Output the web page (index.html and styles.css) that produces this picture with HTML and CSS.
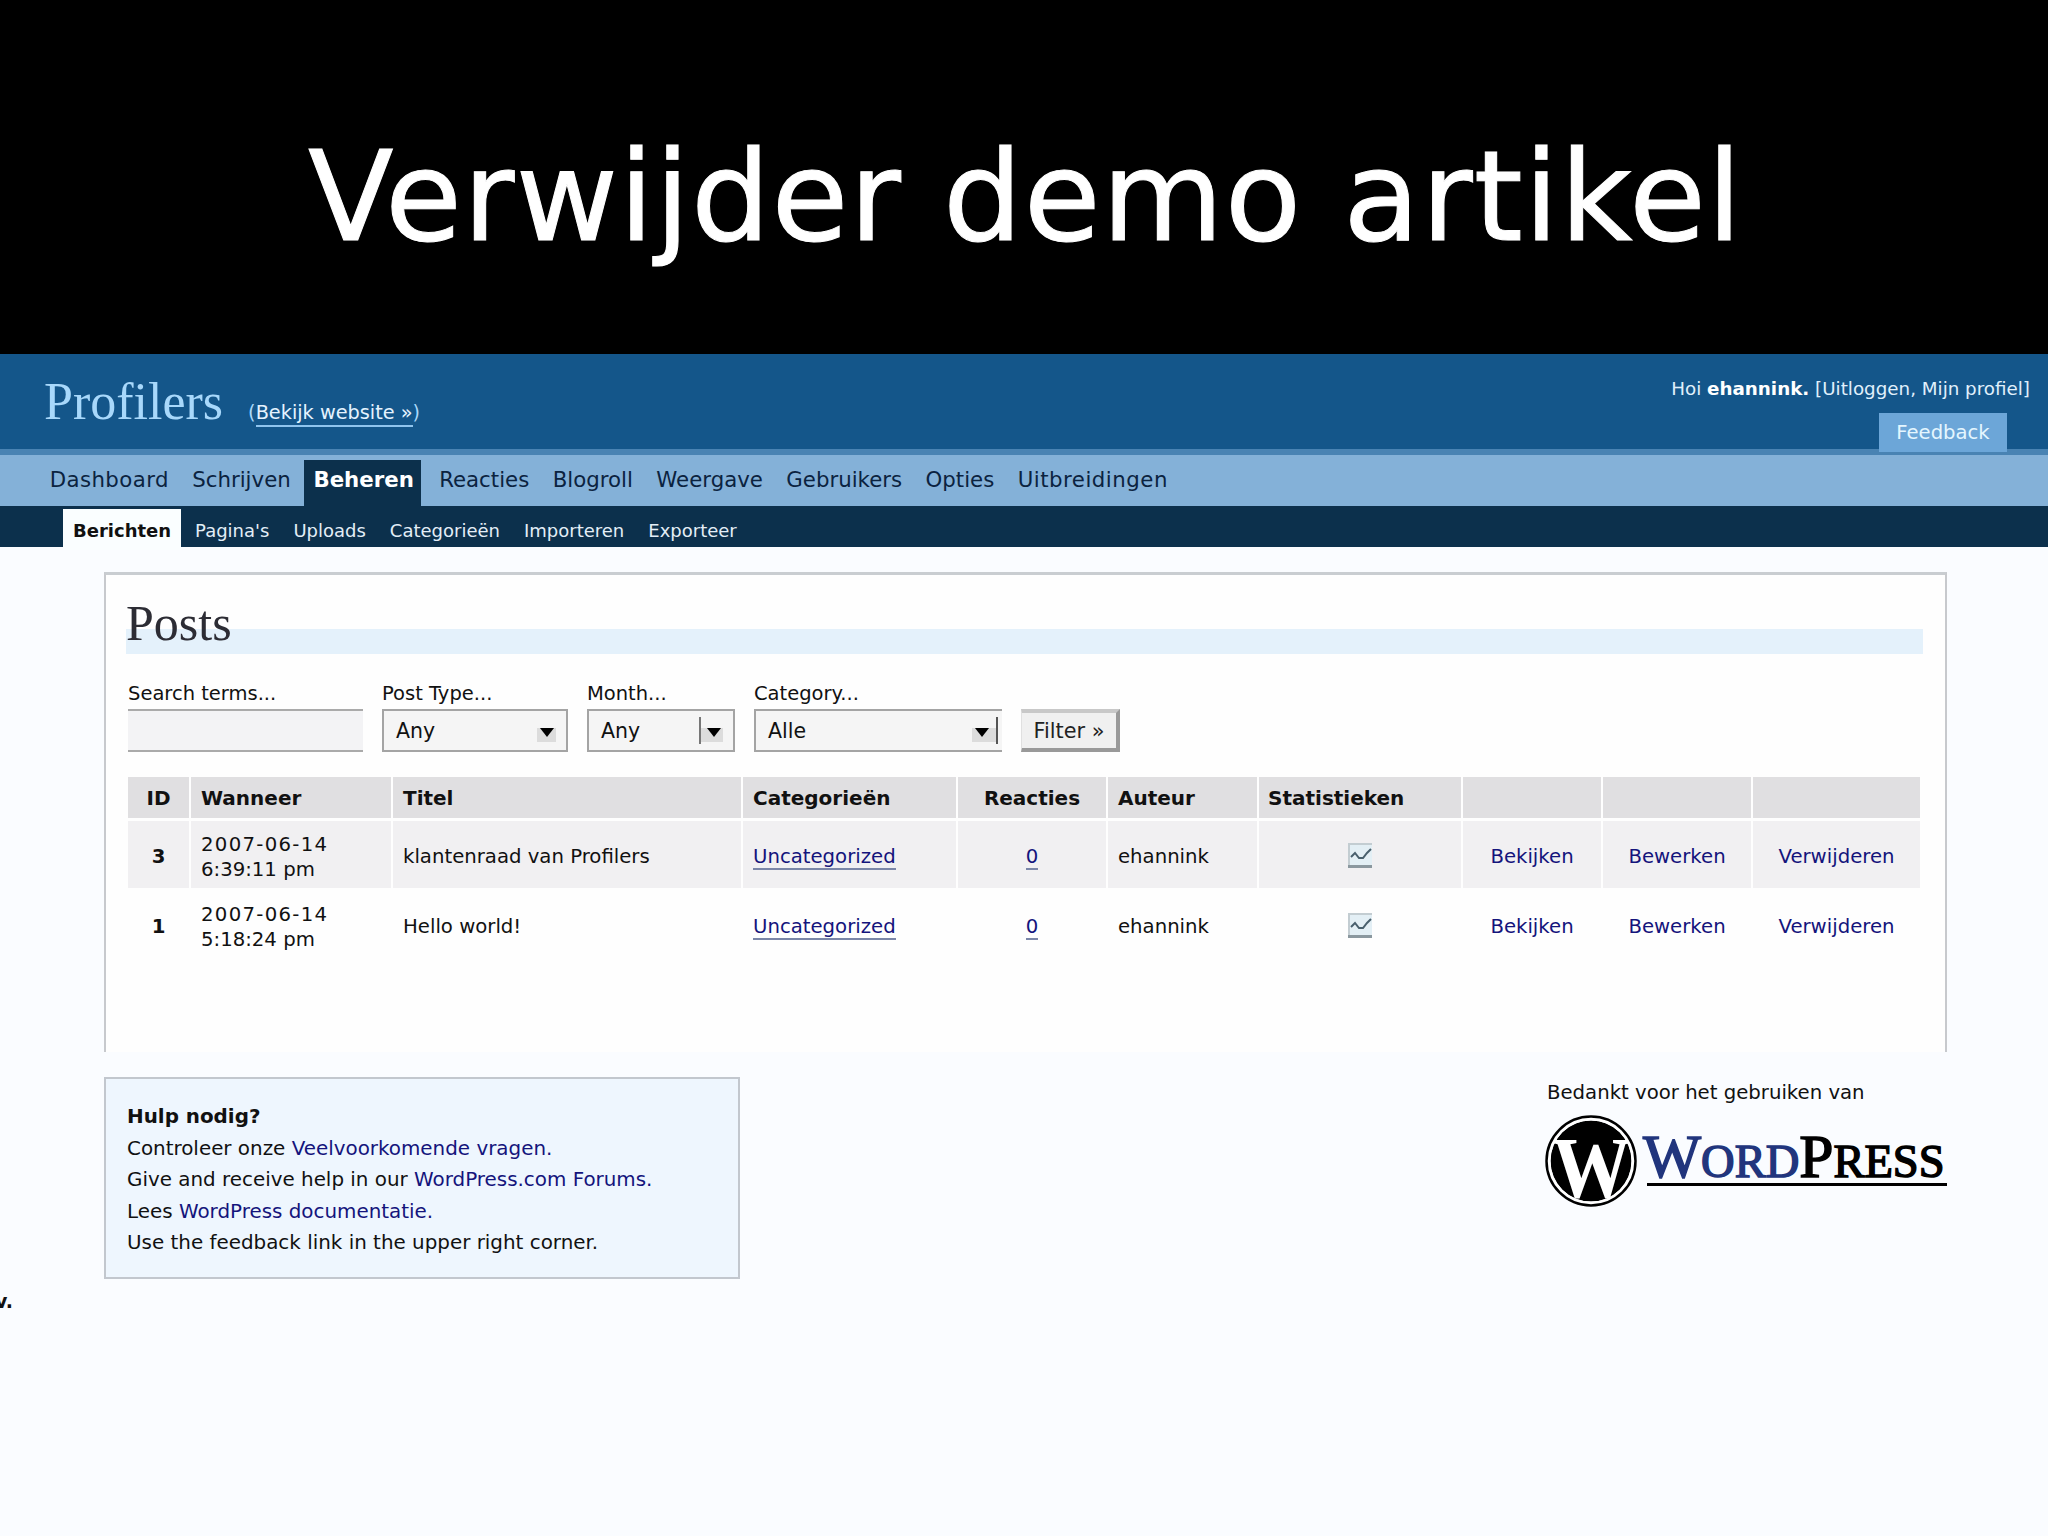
FILE: index.html
```html
<!DOCTYPE html>
<html lang="nl">
<head>
    <meta charset="UTF-8">
    <meta name="viewport" content="width=device-width, initial-scale=1.0">
    <title>Verwijder demo artikel</title>
    <link rel="stylesheet" href="styles.css">
</head>
<body>
    <div class="slide-title">Verwijder demo artikel</div>

    <header class="site-header">
        <div class="site-name">
            <h1>Profilers</h1>
            <span class="view-site">(<a href="#">Bekijk website »</a>)</span>
        </div>
        <div class="user-area">
            <p class="user-info">Hoi <strong>ehannink.</strong> [<a href="#">Uitloggen</a>, <a href="#">Mijn profiel</a>]</p>
            <a class="feedback" href="#">Feedback</a>
        </div>
    </header>

    <ul class="menu">
        <li class="first">Dashboard</li>
        <li>Schrijven</li>
        <li class="current">Beheren</li>
        <li>Reacties</li>
        <li>Blogroll</li>
        <li>Weergave</li>
        <li>Gebruikers</li>
        <li>Opties</li>
        <li class="last">Uitbreidingen</li>
    </ul>

    <ul class="submenu">
        <li class="current">Berichten</li>
        <li>Pagina's</li>
        <li>Uploads</li>
        <li>Categorieën</li>
        <li>Importeren</li>
        <li>Exporteer</li>
    </ul>

    <main class="wrap">
        <h2><span>Posts</span></h2>

        <form class="filters">
            <div class="field search">
                <label>Search terms...</label>
                <div class="text-box"></div>
            </div>
            <div class="field type">
                <label>Post Type...</label>
                <div class="select">Any<span class="arrow"></span></div>
            </div>
            <div class="field month">
                <label>Month...</label>
                <div class="select">Any<span class="arrow line-left"></span></div>
            </div>
            <div class="field category">
                <label>Category...</label>
                <div class="select">Alle<span class="arrow line-right"></span></div>
            </div>
            <button type="button">Filter »</button>
        </form>

        <table>
            <colgroup>
                <col class="c-id"><col class="c-when"><col class="c-title"><col class="c-cat"><col class="c-comments">
                <col class="c-author"><col class="c-stats"><col class="c-view"><col class="c-edit"><col class="c-delete">
            </colgroup>
            <thead>
                <tr>
                    <th class="center">ID</th>
                    <th>Wanneer</th>
                    <th>Titel</th>
                    <th>Categorieën</th>
                    <th class="center">Reacties</th>
                    <th>Auteur</th>
                    <th class="stats-head">Statistieken</th>
                    <th></th>
                    <th></th>
                    <th></th>
                </tr>
            </thead>
            <tbody>
                <tr class="alternate">
                    <td class="center id">3</td>
                    <td><span class="date">2007-06-14</span><br>6:39:11 pm</td>
                    <td>klantenraad van Profilers</td>
                    <td><a class="underlined" href="#">Uncategorized</a></td>
                    <td class="center"><a class="underlined" href="#">0</a></td>
                    <td>ehannink</td>
                    <td class="center">
                        <svg class="chart" viewBox="0 0 24 25">
                            <rect x="0" y="0" width="24" height="25" fill="#e3eff5"/>
                            <path d="M1 0V24M0 1H24" stroke="#c3cdd2" stroke-width="2"/>
                            <path d="M0 23.5H24" stroke="#8b989f" stroke-width="3"/>
                            <path d="M3 14L7 10L11 15H15L19 10L23 6" fill="none" stroke="#49606d" stroke-width="2"/>
                        </svg>
                    </td>
                    <td class="center"><a href="#">Bekijken</a></td>
                    <td class="center"><a href="#">Bewerken</a></td>
                    <td class="center"><a href="#">Verwijderen</a></td>
                </tr>
                <tr>
                    <td class="center id">1</td>
                    <td><span class="date">2007-06-14</span><br>5:18:24 pm</td>
                    <td>Hello world!</td>
                    <td><a class="underlined" href="#">Uncategorized</a></td>
                    <td class="center"><a class="underlined" href="#">0</a></td>
                    <td>ehannink</td>
                    <td class="center">
                        <svg class="chart" viewBox="0 0 24 25">
                            <rect x="0" y="0" width="24" height="25" fill="#e3eff5"/>
                            <path d="M1 0V24M0 1H24" stroke="#c3cdd2" stroke-width="2"/>
                            <path d="M0 23.5H24" stroke="#8b989f" stroke-width="3"/>
                            <path d="M3 14L7 10L11 15H15L19 10L23 6" fill="none" stroke="#49606d" stroke-width="2"/>
                        </svg>
                    </td>
                    <td class="center"><a href="#">Bekijken</a></td>
                    <td class="center"><a href="#">Bewerken</a></td>
                    <td class="center"><a href="#">Verwijderen</a></td>
                </tr>
            </tbody>
        </table>
    </main>

    <footer class="footer">
        <div class="help">
            <strong>Hulp nodig?</strong>
            <p>Controleer onze <a href="#">Veelvoorkomende vragen.</a></p>
            <p>Give and receive help in our <a href="#">WordPress.com Forums.</a></p>
            <p>Lees <a href="#">WordPress documentatie.</a></p>
            <p>Use the feedback link in the upper right corner.</p>
        </div>
        <div class="thanks">
            <p>Bedankt voor het gebruiken van</p>
            <div class="logo">
                <svg class="logo-mark" viewBox="0 0 92 92">
                    <circle cx="46" cy="46" r="40.5" fill="#000"/>
                    <text class="logo-w" x="7" y="82" textLength="79" lengthAdjust="spacingAndGlyphs">W</text>
                    <circle cx="46" cy="46" r="42" fill="none" stroke="#fff" stroke-width="3"/>
                    <circle cx="46" cy="46" r="44.5" fill="none" stroke="#000" stroke-width="2.5"/>
                </svg>
                <div class="logo-text"><span class="word">W<small>ORD</small></span><span class="press">P<small>RESS</small></span></div>
            </div>
        </div>
    </footer>

    <p class="version">v.</p>
</body>
</html>
```

FILE: styles.css
```css
* {
    box-sizing: border-box;
}

body {
    margin: 0;
    height: 1536px;
    overflow: hidden;
    background-color: #fafcff;
    color: #111;
    font-family: "DejaVu Sans", Verdana, sans-serif;
    font-size: 19.7px;
}

h1, h2, p, ul {
    margin: 0;
    padding: 0;
    font-weight: normal;
}

ul {
    display: flex;
    list-style: none;
}

a {
    color: #14147c;
    text-decoration: none;
}

.slide-title {
    height: 354px;
    padding: 134px 0 0 3px;
    background-color: #000;
    color: #fff;
    font-size: 125px;
    letter-spacing: 1.2px;
    line-height: 125px;
    text-align: center;
    white-space: nowrap;
    -webkit-text-stroke: 1px #fff;
}

/* header */
.site-header {
    display: flex;
    justify-content: space-between;
    height: 95px;
    padding: 22px 18px 0 44px;
    background-color: #14568a;
}

.site-name {
    display: flex;
    align-items: baseline;
    gap: 25px;
}

.site-name h1 {
    color: #a8d8fb;
    font-family: "Liberation Serif", serif;
    font-size: 52px;
    line-height: 52px;
}

.view-site {
    color: #a8d8fb;
    font-size: 19.3px;
}

.view-site a {
    padding-bottom: 1px;
    border-bottom: 2px solid #8fc4ee;
    color: #e4f3ff;
}

.user-area {
    display: flex;
    flex-direction: column;
    align-items: flex-end;
}

.user-info {
    padding-top: 1px;
    color: #e0f0fc;
    font-size: 18.3px;
    line-height: 24px;
    white-space: nowrap;
}

.user-info strong {
    color: #fff;
}

.user-info a {
    color: #e0f0fc;
}

.feedback {
    position: relative;
    z-index: 1;
    width: 128px;
    height: 39px;
    margin: 12px 23px 0 0;
    background-color: #6ca6d8;
    color: #e4f6ff;
    font-size: 19.6px;
    line-height: 39px;
    text-align: center;
}

/* navigation */
.menu {
    height: 57px;
    padding-left: 38px;
    border-top: 6px solid #4983b3;
    background-color: #84b1d8;
    color: #0b2340;
    font-size: 21.3px;
}

.menu li {
    height: 46px;
    margin-top: 5px;
    padding: 0 11.7px;
    line-height: 39px;
}

.menu .first {
    letter-spacing: 0.4px;
}

.menu .last {
    letter-spacing: 0.5px;
}

.menu .current {
    width: 117px;
    margin: 5px 6px 0 2px;
    padding: 0 9px;
    background-color: #0c304c;
    color: #fff;
    font-weight: bold;
}

.submenu {
    gap: 4px;
    height: 41px;
    padding: 3px 0 0 63px;
    background-color: #0c304c;
    color: #e3eef7;
    font-size: 18px;
}

.submenu li {
    height: 38px;
    padding: 3px 10px 0;
    line-height: 38px;
}

.submenu .current {
    height: 41px;
    background-color: #fafeff;
    color: #111;
    font-weight: bold;
}

/* posts panel */
.wrap {
    width: 1843px;
    height: 480px;
    margin: 25px 0 0 104px;
    padding: 0 22px 0 20px;
    border: 2px solid #c7c9cd;
    border-top: 3px solid #c9cdd1;
    border-bottom: none;
    background-color: #fefefe;
}

.wrap h2 {
    height: 79px;
    padding-top: 23px;
    background: linear-gradient(#e4f1fb, #e4f1fb) 0 54px / 100% 25px no-repeat;
    color: #2c2c34;
    font-family: "Liberation Serif", serif;
    font-size: 50px;
    line-height: 50px;
}

.filters {
    display: flex;
    align-items: flex-end;
    gap: 19px;
    height: 98px;
    margin-left: 2px;
}

.field label {
    display: block;
    height: 28px;
    padding-top: 1px;
    font-size: 19.5px;
    line-height: 24px;
    white-space: nowrap;
}

.text-box {
    height: 43px;
    border: solid #aaa;
    border-width: 2px 0;
    background-color: #f3f3f5;
}

.select {
    display: flex;
    align-items: center;
    justify-content: space-between;
    height: 43px;
    padding: 0 10px 0 12px;
    border: 2px solid #a4a4a4;
    background-color: #f5f5f5;
    font-size: 20.5px;
}

.search {
    width: 235px;
}

.type {
    width: 186px;
}

.month {
    width: 148px;
}

.category {
    width: 248px;
}

.category .select {
    padding-right: 4px;
    border-right: none;
}

.arrow {
    display: flex;
    align-items: center;
    justify-content: center;
    width: 19px;
    height: 27px;
    background: linear-gradient(#dcdcdc, #dcdcdc) center 11px / 100% 14px no-repeat;
    box-sizing: content-box;
}

.arrow::before {
    content: "";
    border: 7px solid transparent;
    border-top: 9px solid #000;
    border-bottom: none;
    margin-top: 4px;
}

.line-left {
    padding-left: 3px;
    border-left: 2px solid #777;
}

.line-right {
    padding-right: 5px;
    border-right: 2px solid #555;
}

.filters button {
    width: 99px;
    height: 43px;
    padding: 0;
    border: solid #999;
    border-width: 4px 4px 4px 1px;
    border-top-color: #c8c8c8;
    border-left-color: #e0e0e0;
    background-color: #f0f0f0;
    color: #222;
    font-family: inherit;
    font-size: 20.8px;
}

table {
    width: 1796px;
    margin-top: 22px;
    border-spacing: 2px 3px;
    table-layout: fixed;
}

.c-id { width: 61px; }
.c-when { width: 200px; }
.c-title { width: 348px; }
.c-cat { width: 213px; }
.c-comments { width: 148px; }
.c-author { width: 149px; }
.c-stats { width: 202px; }
.c-view { width: 138px; }
.c-edit { width: 148px; }
.c-delete { width: 167px; }

th {
    height: 41px;
    padding: 0 0 0 10px;
    background-color: #e0dfe1;
    font-size: 20px;
    text-align: left;
}

th.stats-head {
    padding-left: 9px;
}

td {
    height: 67px;
    padding: 4px 0 0 10px;
    line-height: 25px;
    white-space: nowrap;
}

th.center, td.center {
    padding-left: 0;
    text-align: center;
}

.alternate td {
    background-color: #f1f0f2;
}

.id {
    font-weight: bold;
}

.date {
    letter-spacing: 1.3px;
}

.underlined {
    border-bottom: 2px solid #7a86a8;
}

.chart {
    display: block;
    width: 24px;
    height: 25px;
    margin: -2px auto 0;
}

/* footer */
.footer {
    display: flex;
    justify-content: space-between;
    width: 1843px;
    margin: 25px 0 0 104px;
}

.help {
    width: 636px;
    height: 202px;
    padding: 22px 21px 0;
    border: 2px solid #c2c7ce;
    background-color: #eef6fe;
    font-size: 19.9px;
    line-height: 31.5px;
    white-space: nowrap;
}

.thanks {
    width: 402px;
    padding-top: 3px;
}

.thanks p {
    padding: 1px 0 0 2px;
    font-size: 19.7px;
    line-height: 24px;
    white-space: nowrap;
}

.logo {
    display: flex;
    align-items: flex-start;
    margin-top: 10px;
}

.logo-mark {
    width: 92px;
    height: 92px;
}

.logo-w {
    fill: #fff;
    font-family: "Liberation Serif", serif;
    font-size: 86px;
    font-weight: bold;
}

.logo-text {
    width: 300px;
    height: 49px;
    margin: 22px 0 0 10px;
    border-bottom: 3px solid #000;
    font-family: "Liberation Serif", serif;
    font-size: 61.5px;
    line-height: 38px;
    white-space: nowrap;
}

.logo-text span {
    -webkit-text-stroke: 1.5px currentColor;
}

.logo-text small {
    font-size: 46.5px;
}

.word {
    margin-left: -4px;
    color: #21357d;
}

.press {
    color: #000;
}

.version {
    margin: 10px 0 0 -5px;
    font-size: 19px;
    font-weight: bold;
    line-height: 24px;
}
```
